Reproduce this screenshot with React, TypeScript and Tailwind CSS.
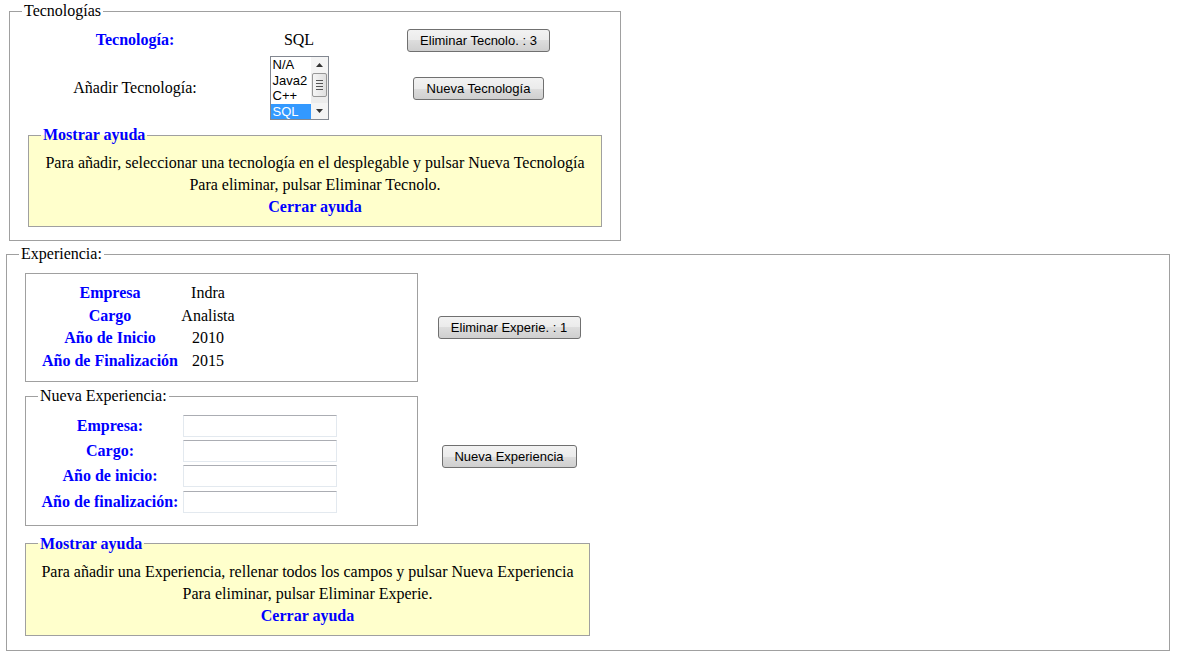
import { ReactNode } from "react"

interface BotonProps {
    text: string
    width: string
}

function Boton({ text, width }: BotonProps) {
    return (
        <button
            type="button"
            className={`${width} h-[23px] rounded-[3px] border border-[#707070] bg-[linear-gradient(#f2f2f2,#ebebeb_50%,#dddddd_50%,#cfcfcf)] font-['Liberation_Sans',Arial,sans-serif] text-[13px] leading-[21px] text-black`}
        >
            {text}
        </button>
    )
}

function Lista() {
    const tecnologias = ["N/A", "Java2", "C++", "SQL"]
    return (
        <div className="flex h-[64px] w-[59px] border border-[#828790] bg-white font-['Liberation_Sans',Arial,sans-serif] text-[13px]">
            <div className="flex-1 overflow-hidden">
                {tecnologias.map((t) => (
                    <div key={t} className={`h-[15.5px] pl-[2px] leading-[15px] ${t === "SQL" ? "bg-[#3399ff] text-white" : "text-black"}`}>
                        {t}
                    </div>
                ))}
            </div>
            <div className="flex w-[17px] flex-col bg-[#ececec]">
                <div className="flex h-[16px] items-center justify-center bg-[#f4f4f4]">
                    <svg width="7" height="4" viewBox="0 0 7 4"><path d="M0 4 L3.5 0 L7 4 Z" fill="#333" /></svg>
                </div>
                <div className="mx-[1px] flex h-[24px] flex-col items-center justify-center gap-[2px] rounded-[2px] border border-[#979797] bg-[linear-gradient(90deg,#f5f5f5,#e0e0e0)]">
                    <div className="h-px w-[7px] bg-[#555]" />
                    <div className="h-px w-[7px] bg-[#555]" />
                    <div className="h-px w-[7px] bg-[#555]" />
                    <div className="h-px w-[7px] bg-[#555]" />
                </div>
                <div className="flex-1" />
                <div className="flex h-[16px] items-center justify-center bg-[#f4f4f4]">
                    <svg width="7" height="4" viewBox="0 0 7 4"><path d="M0 0 L3.5 4 L7 0 Z" fill="#333" /></svg>
                </div>
            </div>
        </div>
    )
}

interface AyudaProps {
    lineas: string[]
    className?: string
}

function Ayuda({ lineas, className }: AyudaProps) {
    return (
        <fieldset className={`border border-[#a0a0a0] bg-[#ffffcc] px-[12px] pt-[8px] pb-[8px] leading-[22px] ${className ?? ""}`}>
            <legend className="px-[2px] text-left font-bold leading-[18px] text-[#0000ff]">Mostrar ayuda</legend>
            <div className="text-center">
                {lineas.map((l) => (
                    <div key={l}>{l}</div>
                ))}
                <div className="font-bold text-[#0000ff]">Cerrar ayuda</div>
            </div>
        </fieldset>
    )
}

function Celda({ children, azul }: { children: ReactNode, azul?: boolean }) {
    return <div className={azul ? "font-bold text-[#0000ff]" : "text-black"}>{children}</div>
}

export default function App() {
    const experiencia = [
        ["Empresa", "Indra"],
        ["Cargo", "Analista"],
        ["Año de Inicio", "2010"],
        ["Año de Finalización", "2015"],
    ]
    const campos = ["Empresa:", "Cargo:", "Año de inicio:", "Año de finalización:"]

    return (
        <div className="min-h-[654px] bg-white font-['Liberation_Serif','Times_New_Roman',serif] text-[16px] text-black">
            <fieldset className="mt-[2px] ml-[9px] w-[612px] border border-[#a0a0a0] px-[12px] pt-[6px] pb-[13px]">
                <legend className="px-[2px] leading-[18px]">Tecnologías</legend>
                <div className="grid grid-cols-[226px_102px_257px] grid-rows-[28px_68px] place-items-center">
                    <Celda azul>Tecnología:</Celda>
                    <Celda>SQL</Celda>
                    <Boton text="Eliminar Tecnolo. : 3" width="w-[143px]" />
                    <Celda>Añadir Tecnología:</Celda>
                    <Lista />
                    <Boton text="Nueva Tecnología" width="w-[131px]" />
                </div>
                <Ayuda
                    className="mx-[6px] mt-[4px]"
                    lineas={[
                        "Para añadir, seleccionar una tecnología en el desplegable y pulsar Nueva Tecnología",
                        "Para eliminar, pulsar Eliminar Tecnolo.",
                    ]}
                />
            </fieldset>

            <fieldset className="mt-[4px] ml-[6px] w-[1164px] border border-[#a0a0a0] px-[12px] pt-[10px] pb-[14px]">
                <legend className="px-[2px] leading-[18px]">Experiencia:</legend>
                <div className="ml-[6px] grid grid-cols-[393px_182px] items-center gap-y-[5px]">
                    <div className="border border-[#a0a0a0] pt-[8px] pb-[9px]">
                        <div className="ml-[14px] grid grid-cols-[140px_56px] auto-rows-[22.5px] items-center text-center">
                            {experiencia.map(([k, v]) => (
                                <>
                                    <Celda key={k} azul>{k}</Celda>
                                    <Celda key={v}>{v}</Celda>
                                </>
                            ))}
                        </div>
                    </div>
                    <div className="flex justify-center">
                        <Boton text="Eliminar Experie. : 1" width="w-[143px]" />
                    </div>

                    <fieldset className="border border-[#a0a0a0] px-[12px] pt-[8px] pb-[10px]">
                        <legend className="px-[2px] leading-[18px]">Nueva Experiencia:</legend>
                        <div className="grid grid-cols-[144px_154px] auto-rows-[25.4px] items-center gap-x-[1px]">
                            {campos.map((c) => (
                                <>
                                    <div key={c} className="text-center font-bold text-[#0000ff]">{c}</div>
                                    <input key={c + "-in"} type="text" className="h-[22px] w-[154px] border border-[#e3e9ef] border-t-[#abadb3] bg-white outline-none" />
                                </>
                            ))}
                        </div>
                    </fieldset>
                    <div className="flex justify-center">
                        <Boton text="Nueva Experiencia" width="w-[135px]" />
                    </div>

                    <Ayuda
                        className="col-span-2 mt-[4px] w-[565px]"
                        lineas={[
                            "Para añadir una Experiencia, rellenar todos los campos y pulsar Nueva Experiencia",
                            "Para eliminar, pulsar Eliminar Experie.",
                        ]}
                    />
                </div>
            </fieldset>
        </div>
    )
}
